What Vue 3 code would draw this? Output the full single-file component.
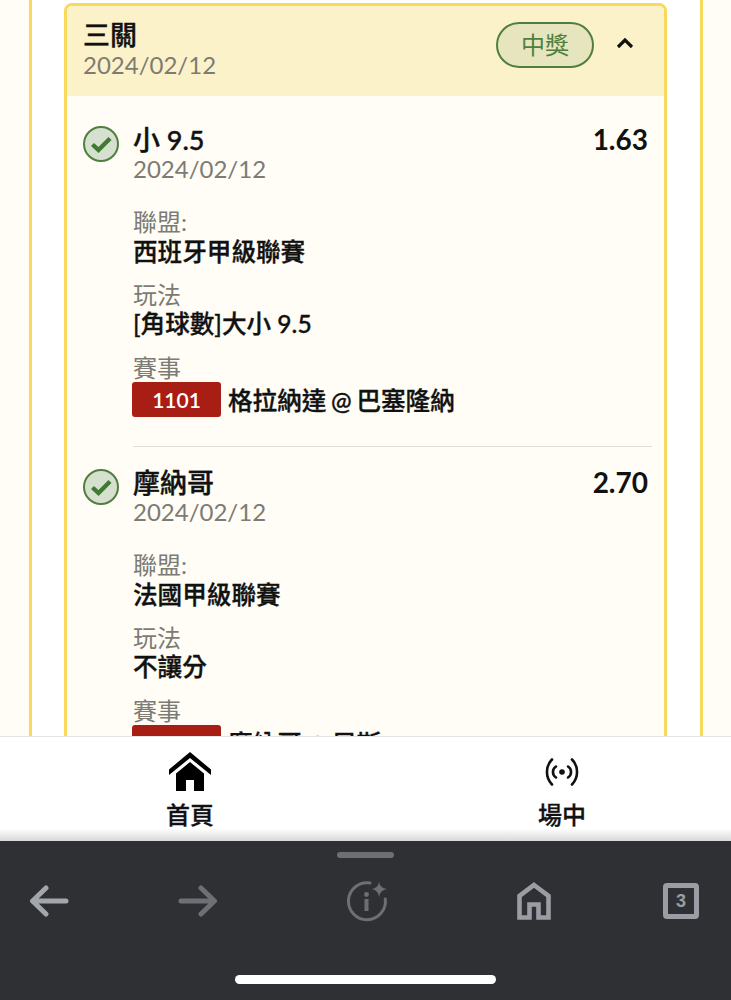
<template>
  <div class="page">
    <div class="content">
      <div class="frame">
        <div class="card">
          <div class="card-head">
            <div>
              <div class="head-title">三關</div>
              <div class="date">2024/02/12</div>
            </div>
            <div class="head-right">
              <span class="pill">中獎</span>
              <svg class="chevron" viewBox="0 0 18 12" width="18" height="12">
                <path d="M2 10 L9 3 L16 10" fill="none" stroke="#111" stroke-width="3.2" />
              </svg>
            </div>
          </div>
          <div class="card-body">
            <div v-for="(leg, i) in legs" :key="i" class="leg">
              <svg class="check" viewBox="0 0 36 36" width="36" height="36">
                <circle cx="18" cy="18" r="17" fill="#d6e0ce" stroke="#4f7f3e" stroke-width="2" />
                <path d="M9.5 18.5 L15.5 24 L27 12.5" fill="none" stroke="#3f7a33" stroke-width="4.4" />
              </svg>
              <div class="leg-main">
                <div class="leg-top">
                  <div class="leg-title">{{ leg.title }}</div>
                  <div class="odds">{{ leg.odds }}</div>
                </div>
                <div class="date">2024/02/12</div>
                <div class="label first">聯盟:</div>
                <div class="value">{{ leg.league }}</div>
                <div class="label">玩法</div>
                <div class="value">{{ leg.play }}</div>
                <div class="label">賽事</div>
                <div class="match">
                  <span class="code">{{ leg.code }}</span>
                  <span class="value">{{ leg.match }}</span>
                </div>
              </div>
            </div>
          </div>
        </div>
      </div>
    </div>

    <div class="tabs">
      <div class="tab">
        <svg viewBox="0 0 42 40" width="42" height="40">
          <path d="M21 0 L42 17.5 V23 L21 6 L0 23 V17.5 Z" fill="#000" />
          <path d="M7 21.5 L21 10 L35 21.5 V39 H25 V28 H17 V39 H7 Z" fill="#000" />
        </svg>
        <span>首頁</span>
      </div>
      <div class="tab live">
        <svg viewBox="0 0 36 40" width="36" height="40">
          <circle cx="18" cy="20" r="2.8" fill="#111" />
          <path d="M12 14.5 A6.5 6.5 0 0 0 12 25.5 M24 14.5 A6.5 6.5 0 0 1 24 25.5" fill="none" stroke="#111" stroke-width="2.6" stroke-linecap="round" />
          <path d="M8 7.5 A18 18 0 0 0 8 32.5 M28 7.5 A18 18 0 0 1 28 32.5" fill="none" stroke="#111" stroke-width="2.6" stroke-linecap="round" />
        </svg>
        <span>場中</span>
      </div>
    </div>

    <div class="browser">
      <div class="grabber"></div>
      <div class="tools">
        <svg class="t-back" viewBox="0 0 40 32" width="40" height="32">
          <path d="M37 16 H4 M17 3 L3.5 16 L17 29" fill="none" stroke="#a3a7ad" stroke-width="5" stroke-linecap="round" stroke-linejoin="round" />
        </svg>
        <svg class="t-fwd" viewBox="0 0 40 32" width="40" height="32">
          <path d="M3 16 H36 M23 3 L36.5 16 L23 29" fill="none" stroke="#6d7074" stroke-width="5" stroke-linecap="round" stroke-linejoin="round" />
        </svg>
        <svg class="t-info" viewBox="0 0 42 42" width="42" height="42">
          <path d="M24 3 A18.5 18.5 0 1 0 39.3 19" fill="none" stroke="#6d6f73" stroke-width="3" stroke-linecap="round" />
          <circle cx="20.5" cy="14.5" r="2.4" fill="#6d6f73" />
          <rect x="18.5" y="19" width="4" height="12" fill="#6d6f73" />
          <path d="M33 2 Q34 8 41 9 Q34 10 33 17 Q32 10 26 9 Q32 8 33 2 Z" fill="#6d6f73" />
        </svg>
        <svg class="t-home" viewBox="0 0 34 38" width="34" height="38">
          <path d="M17 3 L31.5 14 V35.5 H21.5 V22.5 H12.5 V35.5 H2.5 V14 Z" fill="none" stroke="#9a9da3" stroke-width="4.6" />
        </svg>
        <div class="t-tabs">3</div>
      </div>
      <div class="indicator"></div>
    </div>
  </div>
</template>

<script setup>
const legs = [
  {
    title: "小 9.5",
    odds: "1.63",
    league: "西班牙甲級聯賽",
    play: "[角球數]大小 9.5",
    code: "1101",
    match: "格拉納達 @ 巴塞隆納",
  },
  {
    title: "摩納哥",
    odds: "2.70",
    league: "法國甲級聯賽",
    play: "不讓分",
    code: "1102",
    match: "摩納哥 @ 尼斯",
  },
];
</script>

<style>
html,
body {
  margin: 0;
  background: #fff;
}
</style>

<style scoped>
.page {
  width: 731px;
  height: 1000px;
  display: flex;
  flex-direction: column;
  overflow: hidden;
  font-family: Lato, "Noto Sans CJK TC", sans-serif;
  color: #111;
}

.content {
  height: 736px;
  overflow: hidden;
  background: #fffdf6;
  padding: 0 28px 0 29px;
  flex-shrink: 0;
}

.frame {
  background: #fff;
  border-left: 3px solid #f7d95c;
  border-right: 3px solid #f7d95c;
  padding: 3px 33px 0 32px;
  min-height: 800px;
}

.card {
  border: 3px solid #f7d95c;
  border-radius: 8px;
  background: #fffdf5;
}

.card-head {
  height: 90px;
  background: #fcf2c9;
  border-radius: 5px 5px 0 0;
  display: flex;
  justify-content: space-between;
  padding: 13px 30px 0 16px;
  box-sizing: border-box;
}

.head-title {
  font-size: 27px;
  font-weight: 500;
  -webkit-text-stroke: 0.4px #111;
  line-height: 32px;
}

.date {
  font-size: 24px;
  line-height: 28px;
  color: #7c7b74;
}

.head-right {
  display: flex;
  align-items: flex-start;
  gap: 22px;
}

.pill {
  margin-top: 3px;
  width: 98px;
  height: 46px;
  box-sizing: border-box;
  border: 2px solid #4f7f3e;
  border-radius: 23px;
  background: #e7e5be;
  color: #4f7f3e;
  font-size: 24px;
  font-weight: 400;
  line-height: 42px;
  text-align: center;
}

.chevron {
  margin-top: 18px;
}

.card-body {
  padding: 8px 12px 0 16px;
}

.leg {
  display: flex;
  gap: 14px;
}

.check {
  flex-shrink: 0;
  margin-top: 22px;
}

.leg-main {
  flex: 1;
  padding: 21px 0 29px;
  border-bottom: 1px solid #dfdfd9;
}

.leg-top {
  display: flex;
  justify-content: space-between;
  padding-right: 4px;
}

.leg-title {
  font-size: 27px;
  font-weight: 500;
  -webkit-text-stroke: 0.4px #111;
  line-height: 30px;
}

.odds {
  font-size: 28px;
  font-weight: 700;
  line-height: 28px;
}

.label {
  font-size: 24px;
  line-height: 29px;
  color: #7c7b74;
  margin-top: 14px;
}

.label.first {
  margin-top: 24px;
}

.label.first + .value {
  margin-top: 1px;
}

.label.first + .value + .label {
  margin-top: 13px;
}

.value {
  font-size: 24.6px;
  font-weight: 500;
  -webkit-text-stroke: 0.35px #111;
  line-height: 30px;
}

.match {
  display: flex;
  align-items: center;
  gap: 7px;
  word-spacing: -1.5px;
}

.match .value {
  padding-top: 2px;
}

.code {
  width: 89px;
  height: 35px;
  margin-left: -1px;
  background: #a81e14;
  border-radius: 3px;
  color: #fff;
  font-size: 21px;
  font-weight: 600;
  line-height: 35px;
  text-align: center;
}

.tabs {
  height: 105px;
  flex-shrink: 0;
  box-sizing: border-box;
  display: flex;
  background: linear-gradient(to bottom, #fff 88%, #d8d8d8 100%);
  border-top: 1px solid #e4e4e4;
}

.tab {
  width: 380px;
  box-sizing: border-box;
  display: flex;
  flex-direction: column;
  align-items: center;
  padding-top: 15px;
  font-size: 24px;
  font-weight: 500;
  -webkit-text-stroke: 0.3px #111;
  line-height: 32px;
}

.tab.live {
  width: 351px;
  padding-left: 13px;
}

.tab span {
  margin-top: 7px;
}

.browser {
  height: 159px;
  flex-shrink: 0;
  background: #2f3034;
  display: flex;
  flex-direction: column;
  align-items: center;
}

.grabber {
  width: 57px;
  height: 6px;
  margin-top: 11px;
  border-radius: 3px;
  background: #6d6f73;
}

.tools {
  width: 100%;
  height: 44px;
  margin-top: 21px;
  display: flex;
  align-items: center;
}

.t-back {
  margin-left: 29px;
}

.t-fwd {
  margin-left: 109px;
}

.t-info {
  margin-left: 128px;
}

.t-home {
  margin-left: 129px;
}

.t-tabs {
  width: 36px;
  height: 36px;
  box-sizing: border-box;
  margin-left: 112px;
  border: 5px solid #9a9da3;
  border-radius: 4px;
  color: #9a9da3;
  font-family: "Liberation Sans", sans-serif;
  font-size: 18px;
  font-weight: 700;
  line-height: 26px;
  text-align: center;
}

.indicator {
  width: 261px;
  height: 9px;
  margin-top: 52px;
  border-radius: 5px;
  background: #fff;
}
</style>
